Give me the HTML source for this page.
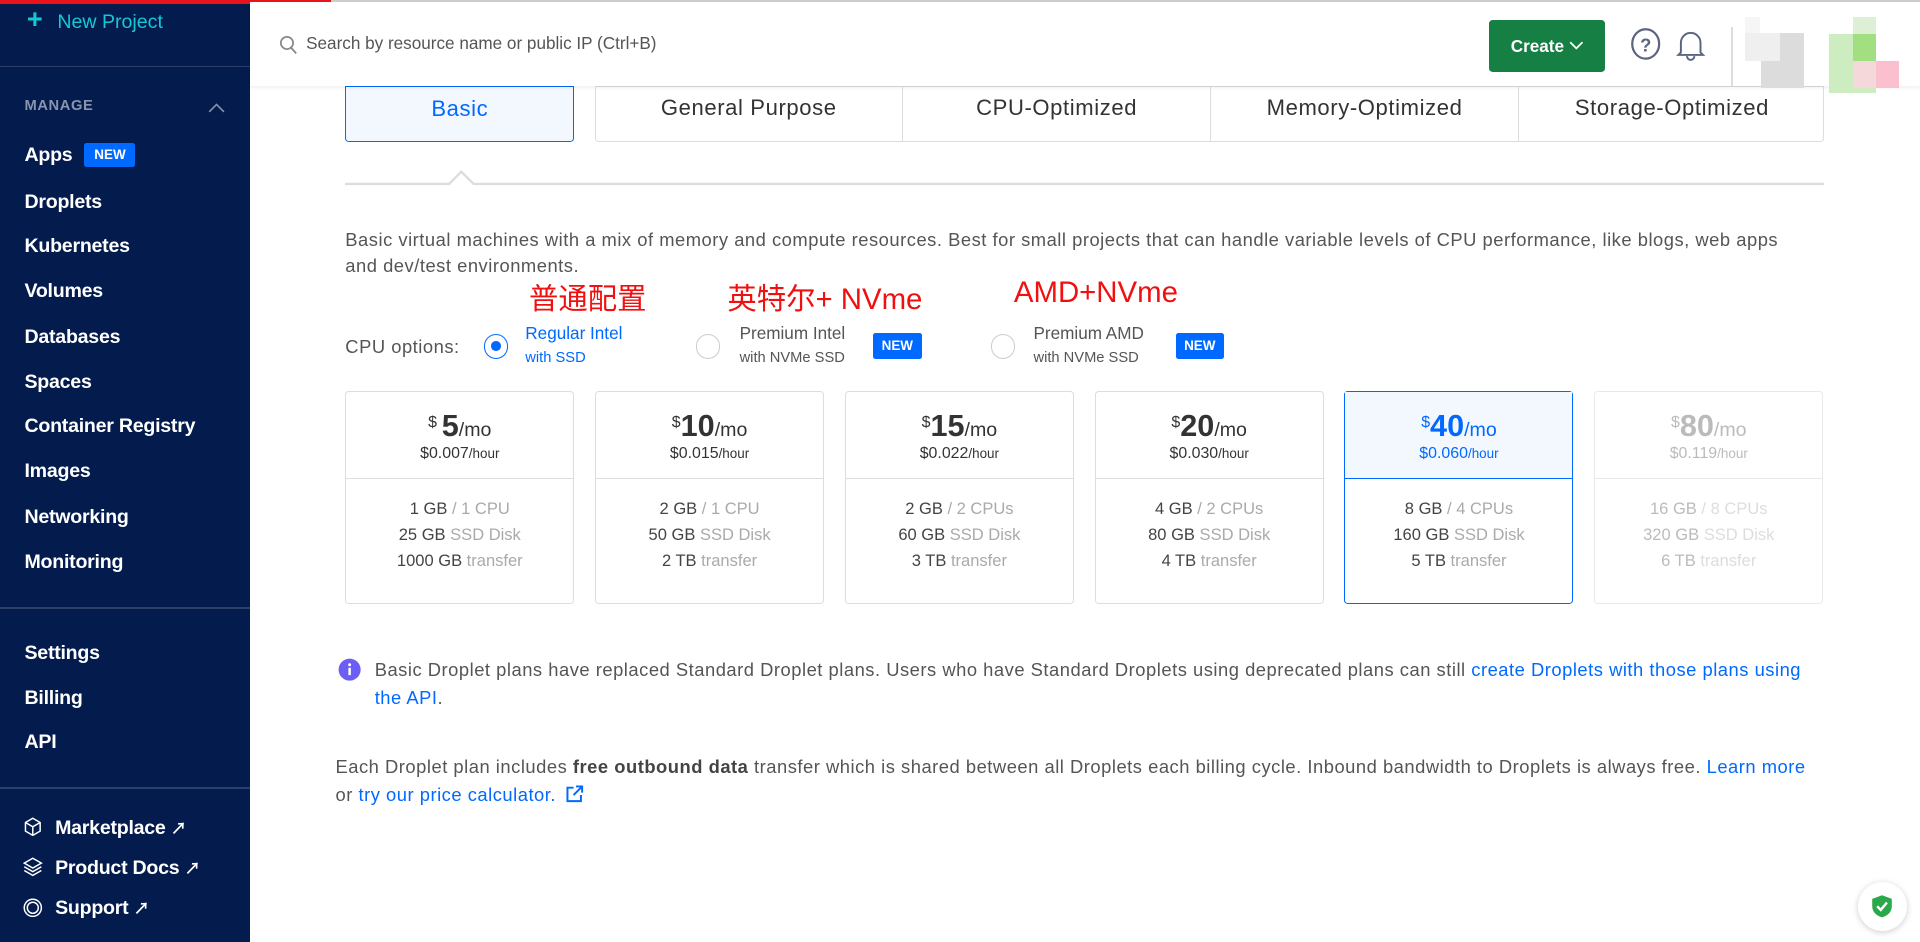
<!DOCTYPE html>
<html><head><meta charset="utf-8"><style>
html{zoom:1.22449}
body{margin:0;width:1568px;height:769px;overflow:hidden;background:#fff;font-family:"Liberation Sans","Noto Sans CJK SC",sans-serif;position:relative;color:#333}
.a{position:absolute;white-space:nowrap}
#sb{position:absolute;left:0;top:0;width:204px;height:769px;background:#031b4d}
.nav{position:absolute;left:20px;color:#fff;font-size:16px;font-weight:bold;letter-spacing:-0.2px}
.hr{position:absolute;left:0;width:204px;height:1px;background:#2d3f68}
.tab{position:absolute;top:70px;height:46px;line-height:36px;text-align:center;font-size:18px;color:#333;box-sizing:border-box;letter-spacing:0.5px}
.card{position:absolute;top:319px;width:187px;height:174px;border:1px solid #ddd;border-radius:3px;box-sizing:border-box;text-align:center;color:#333}
.card .t{height:71px;border-bottom:1px solid #ddd;box-sizing:border-box;padding-top:14px}
.card .p{font-size:14px}
.card .p b{font-size:25px;font-weight:bold}
.card .p sup{font-size:13px;position:relative;top:-2px}
.card .p span{font-size:16px}
.card .h{font-size:13px;margin-top:1px}
.card .h small{font-size:11px}
.card .s{font-size:13.5px;line-height:21.5px;padding-top:14px;color:#444}
.card .s i{font-style:normal;color:#aaa}
.rad{position:absolute;width:20px;height:20px;border:1px solid #ccc;border-radius:50%;box-sizing:border-box;top:273px}
.new{position:absolute;background:#0069ff;color:#fff;font-size:11px;font-weight:bold;padding:0 7px;height:21px;line-height:21px;border-radius:2px}
.red{position:absolute;color:#f01010;font-size:24px;top:225px}
.txt{letter-spacing:0.42px}
a{color:#0069ff;text-decoration:none}
</style></head><body>
<div id="sb">
<div class="a" style="left:22px;top:3px;color:#14c9d6;font-size:16px"><span style="font-size:22px;font-weight:bold;margin-right:12px">+</span>New Project</div>
<div class="hr" style="top:54px"></div>
<div class="a" style="left:20px;top:80px;color:#8a94ad;font-size:12px;font-weight:bold;letter-spacing:0.5px">MANAGE</div>
<svg class="a" style="left:170px;top:83px" width="14" height="9"><path d="M1 8 L7 2 L13 8" stroke="#8a94ad" fill="none" stroke-width="1.3"/></svg>
<div class="nav" style="top:118px">Apps</div>
<div class="a" style="left:69px;top:117px;background:#0069ff;color:#fff;font-size:11px;font-weight:bold;padding:0 8px;height:19px;line-height:19px;border-radius:2px">NEW</div>
<div class="nav" style="top:156px">Droplets</div>
<div class="nav" style="top:192px">Kubernetes</div>
<div class="nav" style="top:229px">Volumes</div>
<div class="nav" style="top:266px">Databases</div>
<div class="nav" style="top:303px">Spaces</div>
<div class="nav" style="top:339px">Container Registry</div>
<div class="nav" style="top:376px">Images</div>
<div class="nav" style="top:413px">Networking</div>
<div class="nav" style="top:450px">Monitoring</div>
<div class="hr" style="top:496px"></div>
<div class="nav" style="top:524px">Settings</div>
<div class="nav" style="top:561px">Billing</div>
<div class="nav" style="top:597px">API</div>
<div class="hr" style="top:643px"></div>
<svg class="a" style="left:19px;top:667px" width="16" height="16"><path d="M8 1 L14 4.5 V11.5 L8 15 L2 11.5 V4.5 Z M2 4.5 L8 8 L14 4.5 M8 8 V15" stroke="#fff" fill="none" stroke-width="1.2"/></svg>
<div class="nav" style="left:45px;top:666px">Marketplace <span style="font-size:13px">↗</span></div>
<svg class="a" style="left:19px;top:700px" width="16" height="16"><path d="M8 1 L15 5 L8 9 L1 5 Z M1 8 L8 12 L15 8 M1 11 L8 15 L15 11" stroke="#fff" fill="none" stroke-width="1.2"/></svg>
<div class="nav" style="left:45px;top:699px">Product Docs <span style="font-size:13px">↗</span></div>
<svg class="a" style="left:19px;top:733px" width="16" height="16"><circle cx="8" cy="8" r="7" stroke="#fff" fill="none" stroke-width="1.2"/><circle cx="8" cy="8" r="4.5" stroke="#fff" fill="none" stroke-width="1.2"/></svg>
<div class="nav" style="left:45px;top:732px">Support <span style="font-size:13px">↗</span></div>
</div>
<div class="a" style="left:0;top:0;width:270px;height:3px;background:#e8131b"></div>
<div class="a" style="left:270px;top:0;width:1298px;height:2px;background:#ccc"></div>
<!-- header -->
<div class="a" style="left:204px;top:2px;width:1364px;height:68px;background:#fff;box-shadow:0 2px 3px rgba(0,0,0,0.06);z-index:5">
<svg class="a" style="left:24px;top:27px" width="16" height="18"><circle cx="6.5" cy="6.5" r="5" stroke="#888" fill="none" stroke-width="1.4"/><path d="M10 10.5 L14 15" stroke="#888" stroke-width="1.5"/></svg>
<div class="a" style="left:46px;top:25px;font-size:14px;color:#555">Search by resource name or public IP (Ctrl+B)</div>
<div class="a" style="left:1012px;top:14px;width:95px;height:43px;background:#157f44;border-radius:3px;color:#fff;font-size:14px;font-weight:bold;line-height:43px;text-align:center">Create <svg width="12" height="8" style="vertical-align:1px"><path d="M1 1 L6 6 L11 1" stroke="#fff" fill="none" stroke-width="1.5"/></svg></div>
<svg class="a" style="left:1128px;top:21px" width="26" height="28"><ellipse cx="12" cy="13" rx="11" ry="12" stroke="#5b6580" fill="none" stroke-width="1.8"/><text x="12" y="19" font-size="15" font-weight="bold" text-anchor="middle" fill="#5b6580" font-family="Liberation Sans">?</text></svg>
<svg class="a" style="left:1165px;top:21px" width="24" height="28"><path d="M4 20 V12 A8 8 0 0 1 20 12 V20 L22 22 H2 Z M9 23 A3 3 0 0 0 15 23" stroke="#5b6580" fill="none" stroke-width="1.6"/></svg>
<div class="a" style="left:1210px;top:20px;width:1px;height:48px;background:#ddd"></div>
<div class="a" style="left:1221px;top:12px;width:12px;height:14px;background:#f6f6f6"></div>
<div class="a" style="left:1221px;top:25px;width:48px;height:23px;background:#efefef"></div>
<div class="a" style="left:1234px;top:48px;width:35px;height:22px;background:#dcdcdc"></div>
<div class="a" style="left:1250px;top:25px;width:19px;height:23px;background:#dcdcdc"></div>
<div class="a" style="left:1309px;top:12px;width:19px;height:14px;background:#ddf0d5"></div>
<div class="a" style="left:1290px;top:26px;width:38px;height:48px;background:#cdecc0"></div>
<div class="a" style="left:1309px;top:26px;width:19px;height:22px;background:#a2df80"></div>
<div class="a" style="left:1309px;top:48px;width:19px;height:22px;background:#f4d8da"></div>
<div class="a" style="left:1328px;top:48px;width:19px;height:22px;background:#fbc0d0"></div>
</div>
<!-- tabs -->
<div class="tab" style="left:282px;width:187px;border:1px solid #0069ff;background:#f3f8ff;color:#0069ff;border-radius:0 0 3px 3px">Basic</div>
<div class="tab" style="left:486px;width:1004px;border:1px solid #ddd;border-radius:0 0 3px 3px"></div>
<div class="tab" style="left:486px;width:251px">General Purpose</div>
<div class="tab" style="left:737px;width:251px;border-left:1px solid #ddd">CPU-Optimized</div>
<div class="tab" style="left:988px;width:252px;border-left:1px solid #ddd">Memory-Optimized</div>
<div class="tab" style="left:1240px;width:250px;border-left:1px solid #ddd">Storage-Optimized</div>
<svg class="a" style="left:282px;top:137px" width="1210" height="16"><path d="M0 13 H85 L95 3 L105 13 H1208" stroke="#ddd" fill="none" stroke-width="2"/></svg>
<div class="a txt" style="left:282px;top:185px;font-size:15px;color:#555;line-height:22px">Basic virtual machines with a mix of memory and compute resources. Best for small projects that can handle variable levels of CPU performance, like blogs, web apps<br>and dev/test environments.</div>
<div class="red" style="left:432px">普通配置</div>
<div class="red" style="left:594px">英特尔+ NVme</div>
<div class="red" style="left:828px">AMD+NVme</div>
<div class="a txt" style="left:282px;top:274px;font-size:15px;color:#555">CPU options:</div>
<div class="rad" style="left:395px;border-color:#0069ff"><div style="position:absolute;left:5px;top:5px;width:8px;height:8px;border-radius:50%;background:#0069ff"></div></div>
<div class="a" style="left:429px;top:264px;font-size:14px;color:#0069ff">Regular Intel</div>
<div class="a" style="left:429px;top:286px;font-size:12px;color:#0069ff">with SSD</div>
<div class="rad" style="left:568px"></div>
<div class="a" style="left:604px;top:264px;font-size:14px;color:#555">Premium Intel</div>
<div class="a" style="left:604px;top:286px;font-size:12px;color:#555">with NVMe SSD</div>
<div class="new" style="left:713px;top:272px">NEW</div>
<div class="rad" style="left:809px"></div>
<div class="a" style="left:844px;top:264px;font-size:14px;color:#555">Premium AMD</div>
<div class="a" style="left:844px;top:286px;font-size:12px;color:#555">with NVMe SSD</div>
<div class="new" style="left:960px;top:272px">NEW</div>
<!-- cards -->
<div class="card" style="left:282px"><div class="t"><div class="p"><sup>$</sup> <b>5</b><span>/mo</span></div><div class="h">$0.007<small>/hour</small></div></div><div class="s">1 GB <i>/ 1 CPU</i><br>25 GB <i>SSD Disk</i><br>1000 GB <i>transfer</i></div></div>
<div class="card" style="left:486px"><div class="t"><div class="p"><sup>$</sup><b>10</b><span>/mo</span></div><div class="h">$0.015<small>/hour</small></div></div><div class="s">2 GB <i>/ 1 CPU</i><br>50 GB <i>SSD Disk</i><br>2 TB <i>transfer</i></div></div>
<div class="card" style="left:690px"><div class="t"><div class="p"><sup>$</sup><b>15</b><span>/mo</span></div><div class="h">$0.022<small>/hour</small></div></div><div class="s">2 GB <i>/ 2 CPUs</i><br>60 GB <i>SSD Disk</i><br>3 TB <i>transfer</i></div></div>
<div class="card" style="left:894px"><div class="t"><div class="p"><sup>$</sup><b>20</b><span>/mo</span></div><div class="h">$0.030<small>/hour</small></div></div><div class="s">4 GB <i>/ 2 CPUs</i><br>80 GB <i>SSD Disk</i><br>4 TB <i>transfer</i></div></div>
<div class="card" style="left:1098px;border-color:#0069ff;color:#0069ff"><div class="t" style="background:#f3f8ff;border-color:#0069ff"><div class="p"><sup>$</sup><b>40</b><span>/mo</span></div><div class="h">$0.060<small>/hour</small></div></div><div class="s">8 GB <i>/ 4 CPUs</i><br>160 GB <i>SSD Disk</i><br>5 TB <i>transfer</i></div></div>
<div class="card" style="left:1302px;color:#bbb;border-color:#e8e8e8"><div class="t" style="border-color:#e8e8e8"><div class="p"><sup>$</sup><b>80</b><span>/mo</span></div><div class="h">$0.119<small>/hour</small></div></div><div class="s" style="color:#bbb">16 GB <i style="color:#ddd">/ 8 CPUs</i><br>320 GB <i style="color:#ddd">SSD Disk</i><br>6 TB <i style="color:#ddd">transfer</i></div></div>
<!-- info -->
<svg class="a" style="left:276px;top:537px" width="19" height="19"><circle cx="9.5" cy="9.5" r="9" fill="#6c5ef5"/><rect x="8.5" y="8" width="2" height="6" fill="#fff"/><circle cx="9.5" cy="5.5" r="1.2" fill="#fff"/></svg>
<div class="a txt" style="left:306px;top:536px;font-size:15px;color:#555;line-height:23px">Basic Droplet plans have replaced Standard Droplet plans. Users who have Standard Droplets using deprecated plans can still <a>create Droplets with those plans using</a><br><a>the API</a>.</div>
<div class="a txt" style="left:274px;top:615px;font-size:15px;color:#555;line-height:23px">Each Droplet plan includes <b style="color:#444">free outbound data</b> transfer which is shared between all Droplets each billing cycle. Inbound bandwidth to Droplets is always free. <a>Learn more</a><br>or <a>try our price calculator.</a> <svg width="16" height="16" style="vertical-align:-2px;margin-left:3px"><path d="M7 3 H2 V14 H13 V9 M9 2 H14 V7 M14 2 L7 9" stroke="#0069ff" fill="none" stroke-width="1.6"/></svg></div>
<div class="a" style="left:1517px;top:720px;width:40px;height:40px;border-radius:50%;background:#fff;box-shadow:0 1px 5px rgba(0,0,0,0.2)"><svg style="position:absolute;left:11px;top:10px" width="18" height="20"><path d="M9 1 L17 4 V10 C17 15 13 18 9 19 C5 18 1 15 1 10 V4 Z" fill="#2aa84a"/><path d="M5 10 L8 13 L13 7" stroke="#fff" fill="none" stroke-width="2"/></svg></div>
</body></html>
